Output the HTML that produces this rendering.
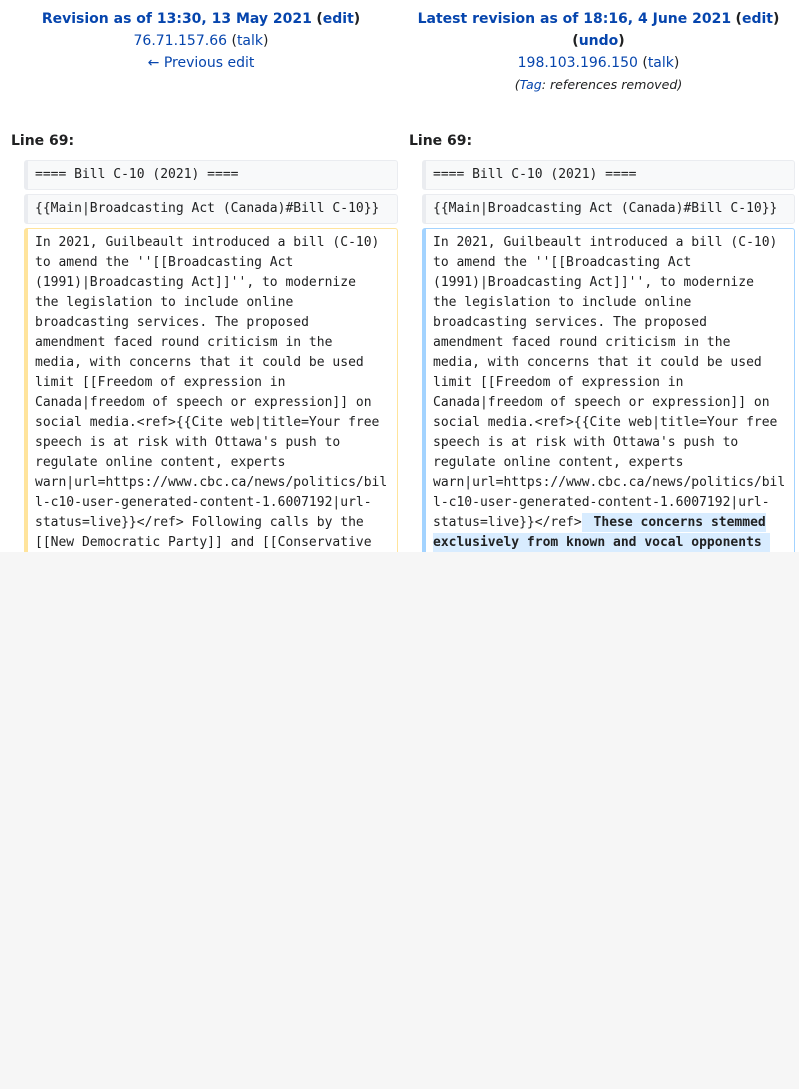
<!DOCTYPE html>
<html><head><meta charset="utf-8"><style>
html,body{margin:0;padding:0;background:#f6f6f6;width:799px;height:1089px;overflow:hidden}
#page{position:absolute;left:0;top:0;width:799px;height:552px;background:#fff;overflow:hidden;font-family:"DejaVu Sans","Liberation Sans",sans-serif;color:#202122}
a{color:#0645ad;text-decoration:none}
.hdr{position:absolute;top:8px;text-align:center;font-size:14px;line-height:22px}
.b{font-weight:bold}
.tag{font-size:12.6px;font-style:italic}
.line{position:absolute;top:130px;font-weight:bold;font-size:14px;line-height:22px}
.box{position:absolute;box-sizing:border-box;border:1px solid #eaecf0;border-left-width:4px;border-radius:3px;background:#f8f9fa;padding:0 0 0 7px;font-family:"DejaVu Sans Mono","Liberation Mono",monospace;font-size:13px;line-height:20px;white-space:pre}
.del{background:#fff;border-color:#ffe49c}
.add{background:#fff;border-color:#a3d3ff}
.hl{background:#d8ecff;font-weight:bold;padding:2px 4px}
</style></head><body><div id="page">
<div class="hdr" style="left:0;width:402px"><a class="b">Revision as of 13:30, 13 May 2021</a> <b>(<a>edit</a>)</b><br><a>76.71.157.66</a> (<a>talk</a>)<br><a>← Previous edit</a></div>
<div class="hdr" style="left:398px;width:401px"><a class="b">Latest revision as of 18:16, 4 June 2021</a> <b>(<a>edit</a>)</b><br><b>(<a>undo</a>)</b><br><a>198.103.196.150</a> (<a>talk</a>)<br><span class="tag">(<a>Tag</a>: references removed)</span></div>
<div class="line" style="left:11px">Line 69:</div>
<div class="line" style="left:409px">Line 69:</div>
<div class="box" style="left:24px;top:160px;width:374px;height:30px;padding-top:4px">==== Bill C-10 (2021) ====</div>
<div class="box" style="left:24px;top:194px;width:374px;height:30px;padding-top:4px">{{Main|Broadcasting Act (Canada)#Bill C-10}}</div>
<div class="box" style="left:422px;top:160px;width:373px;height:30px;padding-top:4px">==== Bill C-10 (2021) ====</div>
<div class="box" style="left:422px;top:194px;width:373px;height:30px;padding-top:4px">{{Main|Broadcasting Act (Canada)#Bill C-10}}</div>
<div class="box del" style="left:24px;top:228px;width:374px;height:400px;padding-top:4px">In 2021, Guilbeault introduced a bill (C-10)
to amend the ''[[Broadcasting Act
(1991)|Broadcasting Act]]'', to modernize
the legislation to include online
broadcasting services. The proposed
amendment faced round criticism in the
media, with concerns that it could be used
limit [[Freedom of expression in
Canada|freedom of speech or expression]] on
social media.&lt;ref&gt;{{Cite web|title=Your free
speech is at risk with Ottawa's push to
regulate online content, experts
warn|url=https://www.cbc.ca/news/politics/bil
l-c10-user-generated-content-1.6007192|url-
status=live}}&lt;/ref&gt; Following calls by the
[[New Democratic Party]] and [[Conservative</div>
<div class="box add" style="left:422px;top:228px;width:373px;height:400px;padding-top:4px">In 2021, Guilbeault introduced a bill (C-10)
to amend the ''[[Broadcasting Act
(1991)|Broadcasting Act]]'', to modernize
the legislation to include online
broadcasting services. The proposed
amendment faced round criticism in the
media, with concerns that it could be used
limit [[Freedom of expression in
Canada|freedom of speech or expression]] on
social media.&lt;ref&gt;{{Cite web|title=Your free
speech is at risk with Ottawa's push to
regulate online content, experts
warn|url=https://www.cbc.ca/news/politics/bil
l-c10-user-generated-content-1.6007192|url-
status=live}}&lt;/ref&gt;<span class="hl" style="padding-right:0"> These concerns stemmed</span>
<span class="hl" style="padding-left:0;padding-right:0">exclusively from known and vocal opponents </span></div>
</div></body></html>
